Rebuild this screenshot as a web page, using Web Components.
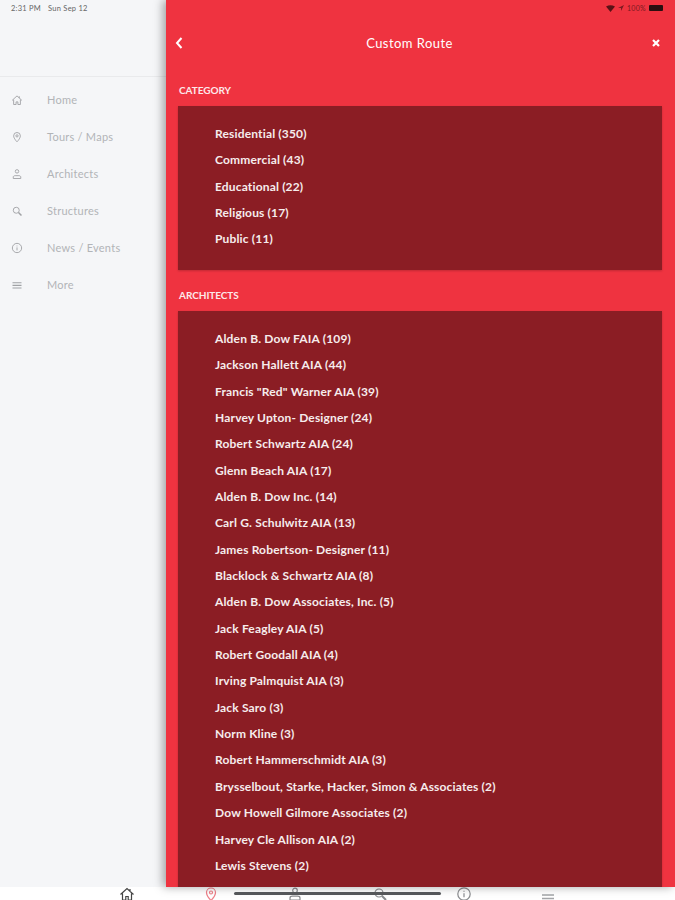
<!DOCTYPE html>
<html lang="en">

<head>
    <meta charset="UTF-8">
    <meta name="viewport" content="width=device-width, initial-scale=1.0">
    <title>Custom Route</title>
    <style>
        html, body { margin: 0; height: 100%; overflow: hidden; background: #fff; }
        body { font-family: Lato, "Liberation Sans", sans-serif; }
    </style>
</head>

<body>
    <route-app>
        <side-nav slot="side">
            <nav-item label="Home" icon="home"></nav-item>
            <nav-item label="Tours / Maps" icon="pin"></nav-item>
            <nav-item label="Architects" icon="user"></nav-item>
            <nav-item label="Structures" icon="search"></nav-item>
            <nav-item label="News / Events" icon="info"></nav-item>
            <nav-item label="More" icon="menu"></nav-item>
        </side-nav>
        <route-panel slot="main">
            <filter-group title="CATEGORY" items="Residential (350)|Commercial (43)|Educational (22)|Religious (17)|Public (11)"></filter-group>
            <filter-group title="ARCHITECTS" items='Alden B. Dow FAIA (109)|Jackson Hallett AIA (44)|Francis "Red" Warner AIA (39)|Harvey Upton- Designer (24)|Robert Schwartz AIA (24)|Glenn Beach AIA (17)|Alden B. Dow Inc. (14)|Carl G. Schulwitz AIA (13)|James Robertson- Designer (11)|Blacklock &amp; Schwartz AIA (8)|Alden B. Dow Associates, Inc. (5)|Jack Feagley AIA (5)|Robert Goodall AIA (4)|Irving Palmquist AIA (3)|Jack Saro (3)|Norm Kline (3)|Robert Hammerschmidt AIA (3)|Brysselbout, Starke, Hacker, Simon &amp; Associates (2)|Dow Howell Gilmore Associates (2)|Harvey Cle Allison AIA (2)|Lewis Stevens (2)'></filter-group>
        </route-panel>
        <tab-bar slot="tabs"></tab-bar>
    </route-app>

<script>
    const icons = {
        home: '<path d="M1.500 8.500 8 2.500l6.500 6M11 3v2.500M3.500 7.500v6.500h3.300v-3.500h2.400V14h3.300V7.500"/>',
        pin: '<path d="M8 14.500S3.500 9.800 3.500 6.500a4.500 4.500 0 0 1 9 0C12.500 9.800 8 14.500 8 14.500z"/><circle cx="8" cy="6.500" r="1.500"/>',
        user: '<circle cx="8" cy="4.500" r="2.300"/><path d="M3 14v-2c0-1 1-1.800 2.500-1.800h5c1.500 0 2.500.8 2.500 1.800v2z"/>',
        search: '<circle cx="7" cy="7" r="4"/><path d="m10 10 4 4" stroke-width="2"/>',
        info: '<circle cx="8" cy="8" r="6.200"/><path d="M8 7.200v4M8 4.800v1"/>',
        menu: '<path d="M2 5h12M2 8.500h12M2 12h12" stroke-width="1.500"/>'
    }

    function iconSvg(name, size) {
        return `<svg width="${size}" height="${size}" viewBox="0 0 16 16" fill="none" stroke="currentColor" stroke-width="1.200">${icons[name]}</svg>`
    }

    class RouteApp extends HTMLElement {
        constructor() {
            super();
            this.attachShadow({ mode: "open" }).innerHTML = `<style>
                :host{ display:grid; grid-template-columns:166px 1fr; grid-template-rows:887px 13px; width:675px; height:900px; overflow:hidden; position:relative; }
                .tabs{ grid-column:1 / 3; }
                .bar{ position:absolute; left:234px; top:892px; width:207px; height:3px; border-radius:2px; background:#55575a; }
            </style>
            <slot name="side"></slot>
            <slot name="main"></slot>
            <div class="tabs"><slot name="tabs"></slot></div>
            <div class="bar"></div>`
        }
    }

    class SideNav extends HTMLElement {
        constructor() {
            super();
            this.attachShadow({ mode: "open" }).innerHTML = `<style>
                :host{ display:block; background:#f5f6f8; height:887px; overflow:hidden; }
                .top{ height:77px; box-sizing:border-box; padding:4px 0 0 11px; border-bottom:1px solid #e9eaec; font-size:7.500px; line-height:9px; letter-spacing:.25px; color:#666; display:flex; gap:7px; }
                .list{ display:flex; flex-direction:column; padding-top:4px; }
            </style>
            <div class="top"><span>2:31 PM</span><span>Sun Sep 12</span></div>
            <div class="list"><slot></slot></div>`
        }
    }

    class NavItem extends HTMLElement {
        constructor() {
            super();
            this.attachShadow({ mode: "open" }).innerHTML = `<style>
                :host{ display:flex; align-items:center; height:37px; padding-left:11px; color:#b2b4b7; font-size:11px; }
                svg{ flex:none; color:#a0a2a5; }
                span{ margin-left:24px; letter-spacing:.25px; }
            </style>
            ${iconSvg(this.getAttribute('icon'), 12)}<span>${this.getAttribute('label')}</span>`
        }
    }

    class RoutePanel extends HTMLElement {
        constructor() {
            super();
            this.attachShadow({ mode: "open" }).innerHTML = `<style>
                :host{ display:block; background:#ef3340; height:887px; overflow:hidden; box-shadow:-3px 0 9px rgba(0,0,0,.35); position:relative; color:#fff; }
                .status{ height:16px; display:flex; justify-content:flex-end; align-items:center; gap:3px; padding:0 12px 0 0; font-size:7px; letter-spacing:.3px; color:#7c1a20; }
                .batt{ width:14px; height:6px; background:#2a0f10; border-radius:1px; }
                header{ height:54px; display:flex; align-items:center; justify-content:space-between; padding:0 15px 0 9px; box-sizing:border-box; }
                h1{ font-size:13px; font-weight:400; margin:0 16px 0 0; letter-spacing:.45px; }
                .body{ padding:13px 13px 0 12px; display:flex; flex-direction:column; gap:18px; }
            </style>
            <div class="status">
                <svg width="9" height="7" viewBox="0 0 9 7"><path d="M0 1.500Q4.500-1 9 1.500L4.500 7z" fill="#5a1216"/></svg>
                <svg width="6" height="6" viewBox="0 0 6 6"><path d="M6 0 0 3h3v3z" fill="#7c1a20"/></svg>
                <span>100%</span><div class="batt"></div>
            </div>
            <header>
                <svg width="8" height="12" viewBox="0 0 8 12" fill="none" stroke="#fff" stroke-width="2"><path d="M6.500 1 2 6l4.500 5"/></svg>
                <h1>Custom Route</h1>
                <svg width="8" height="8" viewBox="0 0 8 8" fill="none" stroke="#fff" stroke-width="2.200"><path d="m1 1 6 6M7 1 1 7"/></svg>
            </header>
            <div class="body"><slot></slot></div>`
        }
    }

    class FilterGroup extends HTMLElement {
        constructor() {
            super();
            const rows = this.getAttribute('items').split('|').map(t => `<li>${t}</li>`).join('')
            this.attachShadow({ mode: "open" }).innerHTML = `<style>
                :host{ display:block; }
                h2{ font-size:10px; line-height:14px; font-weight:700; margin:0 0 9px; padding-left:1px; letter-spacing:-.05px; color:#fde8ea; }
                ul{ list-style:none; margin:0; padding:15px 0 17.250px 37px; background:#8b1d24; box-shadow:0 1px 2px rgba(0,0,0,.2); }
                :host(:last-child) ul{ padding-bottom:40px; }
                li{ height:26.350px; line-height:26.350px; font-size:12px; font-weight:700; letter-spacing:.16px; color:#f6ecec; white-space:nowrap; }
            </style>
            <h2>${this.getAttribute('title')}</h2>
            <ul>${rows}</ul>`
        }
    }

    class TabBar extends HTMLElement {
        constructor() {
            super();
            const tabs = ['home', 'pin', 'user', 'search', 'info', 'menu'].map(n =>
                `<span class="${n}">${iconSvg(n, 16)}</span>`).join('')
            this.attachShadow({ mode: "open" }).innerHTML = `<style>
                :host{ display:flex; justify-content:center; gap:68.400px; background:#fff; height:13px; overflow:hidden; color:#8a8c8f; box-sizing:border-box; }
                span{ display:block; width:16px; height:16px; margin-top:-1px; }
                .home{ color:#444; }
                .pin{ color:#ef7f88; }
                .menu{ margin-top:3px; color:#a3a5a8; }
            </style>${tabs}`
        }
    }

    window.customElements.define('route-app', RouteApp);
    window.customElements.define('side-nav', SideNav);
    window.customElements.define('nav-item', NavItem);
    window.customElements.define('route-panel', RoutePanel);
    window.customElements.define('filter-group', FilterGroup);
    window.customElements.define('tab-bar', TabBar);
</script>
</body>

</html>
